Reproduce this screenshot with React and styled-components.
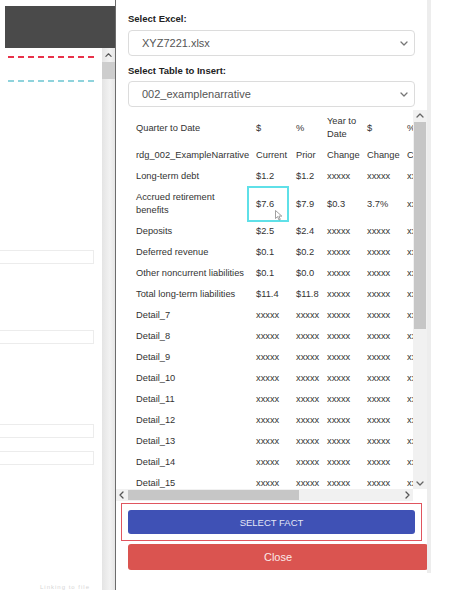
import React from 'react'
import styled, { createGlobalStyle } from 'styled-components'

const Global = createGlobalStyle`
  html, body { margin: 0; padding: 0; background: #fff; overflow: hidden; }
  body { font-family: "Liberation Sans", Arial, sans-serif; }
`

const rows = [
  { label: 'rdg_002_ExampleNarrative', cells: ['Current', 'Prior', 'Change', 'Change', 'C'] },
  { label: 'Long-term debt', cells: ['$1.2', '$1.2', 'xxxxx', 'xxxxx', 'xx'] },
  { label: 'Accrued retirement benefits', cells: ['$7.6', '$7.9', '$0.3', '3.7%', 'xx'], tall: true, pick: 0 },
  { label: 'Deposits', cells: ['$2.5', '$2.4', 'xxxxx', 'xxxxx', 'xx'] },
  { label: 'Deferred revenue', cells: ['$0.1', '$0.2', 'xxxxx', 'xxxxx', 'xx'] },
  { label: 'Other noncurrent liabilities', cells: ['$0.1', '$0.0', 'xxxxx', 'xxxxx', 'xx'] },
  { label: 'Total long-term liabilities', cells: ['$11.4', '$11.8', 'xxxxx', 'xxxxx', 'xx'] },
]
for (let i = 7; i <= 15; i++) {
  rows.push({ label: 'Detail_' + i, cells: ['xxxxx', 'xxxxx', 'xxxxx', 'xxxxx', 'xx'] })
}

const Chevron = ({ dir = 'down', size = 8, color = '#777' }) => {
  const d = {
    down: 'M1 3 L4 6 L7 3',
    up: 'M1 5 L4 2 L7 5',
    left: 'M5 1 L2 4 L5 7',
    right: 'M3 1 L6 4 L3 7',
  }[dir]
  return (
    <svg width={size} height={size} viewBox="0 0 8 8">
      <path d={d} fill="none" stroke={color} strokeWidth="1.3" strokeLinecap="round" strokeLinejoin="round" />
    </svg>
  )
}

function App() {
  return (
    <Page>
      <Global />
      <LeftPane>
        <DarkHeader />
        <LeftBody>
          <LeftContent>
            <Dashes color="#e8324a" />
            <Dashes color="#8fd3dc" top="22px" />
            <GhostInput top="168px" />
            <GhostInput top="66px" />
            <GhostInput top="80px" />
            <GhostInput top="13px" />
            <FaintText>Linking to file</FaintText>
          </LeftContent>
          <LeftScroll>
            <ArrowSlot><Chevron dir="up" size={7} color="#555" /></ArrowSlot>
            <LeftThumb />
          </LeftScroll>
        </LeftBody>
      </LeftPane>

      <Panel>
        <PanelBody>
          <Label>Select Excel:</Label>
          <Select>
            <span>XYZ7221.xlsx</span>
            <Chevron />
          </Select>
          <Label second>Select Table to Insert:</Label>
          <Select second>
            <span>002_examplenarrative</span>
            <Chevron />
          </Select>

          <TableFrame>
            <TableRow>
              <Viewport>
                <Grid>
                  <colgroup>
                    <col style={{ width: 120 }} />
                    <col style={{ width: 40 }} />
                    <col style={{ width: 31 }} />
                    <col style={{ width: 40 }} />
                    <col style={{ width: 40 }} />
                    <col style={{ width: 40 }} />
                  </colgroup>
                  <tbody>
                    <tr>
                      <Cell>Quarter to Date</Cell>
                      <Cell>$</Cell>
                      <Cell>%</Cell>
                      <Cell tall>Year to Date</Cell>
                      <Cell>$</Cell>
                      <Cell>%</Cell>
                    </tr>
                    {rows.map((r) => (
                      <tr key={r.label}>
                        <Cell tall={r.tall}>{r.label}</Cell>
                        {r.cells.map((c, i) => (
                          <Cell key={i} picked={r.pick === i}>
                            {c}
                            {r.pick === i && (
                              <Cursor width="8" height="11" viewBox="0 0 8 11">
                                <path d="M0.5 0.5 L0.5 8.5 L2.6 6.6 L4 10 L5.3 9.4 L3.9 6.1 L6.8 6.1 Z" fill="#fff" stroke="#888" strokeWidth="0.8" />
                              </Cursor>
                            )}
                          </Cell>
                        ))}
                      </tr>
                    ))}
                  </tbody>
                </Grid>
              </Viewport>
              <VScroll>
                <ArrowSlot tall><Chevron dir="up" size={8} color="#666" /></ArrowSlot>
                <VThumb />
                <VTrack />
                <ArrowSlot tall><Chevron dir="down" size={8} color="#666" /></ArrowSlot>
              </VScroll>
            </TableRow>
            <HScroll>
              <HArrow><Chevron dir="left" size={8} color="#555" /></HArrow>
              <HThumb />
              <HTrack />
              <HArrow><Chevron dir="right" size={8} color="#555" /></HArrow>
              <Corner />
            </HScroll>
          </TableFrame>

          <FactOutline>
            <PrimaryButton>SELECT FACT</PrimaryButton>
          </FactOutline>
          <CloseButton>Close</CloseButton>
        </PanelBody>
        <PanelEdge />
      </Panel>
    </Page>
  )
}

export default App

const Page = styled.div`
  display: flex;
  width: 455px;
  height: 597px;
  overflow: hidden;
  background: #fff;
`

const LeftPane = styled.div`
  width: 115px;
  height: 590px;
  flex-shrink: 0;
  display: flex;
  flex-direction: column;
  border-right: 1px solid #6c6c6c;
`

const DarkHeader = styled.div`
  height: 42px;
  margin: 6px 0 0 5px;
  background: #4a4a4a;
`

const LeftBody = styled.div`
  flex: 1;
  display: flex;
`

const LeftContent = styled.div`
  flex: 1;
  padding-top: 8px;
  display: flex;
  flex-direction: column;
`

const Dashes = styled.div`
  height: 2px;
  margin: ${(p) => p.top || '0'} 7px 0 8px;
  background: repeating-linear-gradient(
    to right,
    ${(p) => p.color} 0 6px,
    transparent 6px 10px
  );
`

const GhostInput = styled.div`
  height: 14px;
  width: 94px;
  margin-top: ${(p) => p.top};
  border: 1px solid #ececec;
  border-left: none;
  box-sizing: border-box;
`

const FaintText = styled.div`
  margin-top: auto;
  margin-left: 40px;
  font-size: 6px;
  color: #d6d6d6;
  letter-spacing: 1px;
`

const LeftScroll = styled.div`
  width: 13px;
  display: flex;
  flex-direction: column;
  background: linear-gradient(to right, #e4e4e4, #f2f2f2 60%, #e6e6e6);
`

const ArrowSlot = styled.div`
  height: ${(p) => (p.tall ? '12px' : '14px')};
  display: flex;
  align-items: center;
  justify-content: center;
  flex-shrink: 0;
`

const LeftThumb = styled.div`
  height: 17px;
  background: #cdcdcd;
`

const Panel = styled.div`
  display: flex;
  align-items: flex-start;
`

const PanelBody = styled.div`
  width: 311px;
  padding-top: 12px;
  display: flex;
  flex-direction: column;
`

const PanelEdge = styled.div`
  width: 4px;
  height: 573px;
  background: #ededed;
`

const Label = styled.div`
  margin: ${(p) => (p.second ? '8px' : '0')} 12px 0;
  font-size: 9.5px;
  line-height: 14px;
  font-weight: 700;
  color: #222;
`

const Select = styled.div`
  margin: ${(p) => (p.second ? '3px' : '4px')} 12px 0;
  height: 26px;
  box-sizing: border-box;
  border: 1px solid #dcdcdc;
  border-radius: 4px;
  padding: 0 6px 0 13px;
  display: flex;
  align-items: center;
  justify-content: space-between;
  font-size: 11px;
  color: #555;
`

const TableFrame = styled.div`
  margin-top: 3px;
  display: flex;
  flex-direction: column;
`

const TableRow = styled.div`
  display: flex;
  height: 379px;
`

const Viewport = styled.div`
  flex: 1;
  overflow: hidden;
  padding: 1px 0 0 12px;
`

const Grid = styled.table`
  table-layout: fixed;
  width: 311px;
  border-collapse: collapse;
`

const Cell = styled.td`
  position: relative;
  padding: 4px 0 4px 8px;
  height: ${(p) => (p.tall ? '26px' : '13px')};
  font-size: 9.3px;
  line-height: 13px;
  color: #333;
  white-space: ${(p) => (p.tall ? 'normal' : 'nowrap')};
  overflow: visible;
  vertical-align: middle;
  outline: ${(p) => (p.picked ? '2px solid #5fe0e8' : 'none')};
  outline-offset: -1px;
`

const Cursor = styled.svg`
  position: absolute;
  left: 27px;
  top: 23px;
`

const VScroll = styled.div`
  width: 14px;
  display: flex;
  flex-direction: column;
  background: #f1f1f1;
`

const VThumb = styled.div`
  height: 207px;
  margin: 0 1px;
  background: #c6c6c6;
`

const VTrack = styled.div`
  flex: 1;
`

const HScroll = styled.div`
  height: 12px;
  display: flex;
  background: #f1f1f1;
`

const HArrow = styled.div`
  width: 12px;
  display: flex;
  align-items: center;
  justify-content: center;
`

const HThumb = styled.div`
  width: 171px;
  margin: 1px 0;
  background: #c6c6c6;
`

const HTrack = styled.div`
  flex: 1;
`

const Corner = styled.div`
  width: 14px;
  background: #fff;
`

const FactOutline = styled.div`
  margin: 2px 5px 0;
  padding: 6px 6px;
  border: 1px solid #e0555f;
`

const PrimaryButton = styled.div`
  height: 24px;
  border-radius: 3px;
  background: #3f51b5;
  color: #e3e6f6;
  font-size: 9.5px;
  display: flex;
  align-items: center;
  justify-content: center;
`

const CloseButton = styled.div`
  margin: 3px -1px 0 12px;
  height: 26px;
  border-radius: 3px;
  background: #da5450;
  color: #fbe9e8;
  font-size: 11px;
  display: flex;
  align-items: center;
  justify-content: center;
`
